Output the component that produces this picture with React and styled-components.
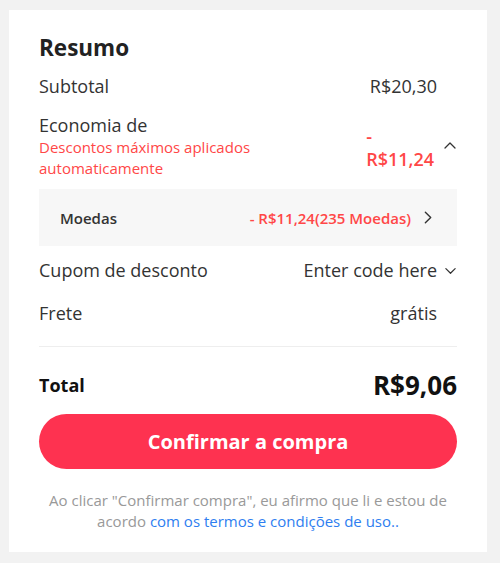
import styled, { createGlobalStyle } from "styled-components"

const GlobalStyle = createGlobalStyle`
  body {
    margin: 0;
    background: #f2f2f2;
    font-family: "Open Sans", "Liberation Sans", sans-serif;
    color: #333;
  }
`

const Card = styled.div`
  margin: 10px 13px 12px 9px;
  background: #fff;
  padding: 24px 30px 20px;
  display: flex;
  flex-direction: column;
`

const Title = styled.h2`
  margin: 0;
  font-size: 22.5px;
  line-height: 28px;
  font-weight: 700;
  color: #222;
`

const Row = styled.div`
  display: grid;
  grid-template-columns: 1fr auto 20px;
  align-items: center;
  margin-top: ${p => p.gap || 0}px;
`

const Label = styled.div`
  font-size: 18px;
  line-height: 24px;
  font-weight: 400;
`

const Value = styled.div`
  font-size: 18px;
  line-height: 24px;
  font-weight: ${p => (p.bold ? 600 : 400)};
  color: ${p => (p.red ? "#ff4747" : "#333")};
  text-align: right;
`

const Note = styled.div`
  font-size: 15px;
  line-height: 21px;
  color: #ff4747;
  max-width: 240px;
`

const Discount = styled(Value)`
  line-height: 23px;
  text-align: left;
  padding: 3px 3px 0 0;
`

const IconCell = styled.div`
  display: flex;
  justify-content: flex-end;
  align-items: center;
`

const SubBox = styled.div`
  margin-top: 10px;
  height: 57px;
  background: #f7f7f7;
  padding: 0 22px 0 21px;
  display: flex;
  align-items: center;
  justify-content: space-between;
`

const SubLabel = styled.span`
  font-size: 15px;
  font-weight: 600;
  color: #333;
`

const SubValue = styled.span`
  display: flex;
  align-items: center;
  gap: 9px;
  font-size: 15px;
  font-weight: 600;
  color: #ff4747;
`

const Divider = styled.hr`
  border: none;
  border-top: 1px solid #eee;
  margin: 21px 0 0;
`

const TotalRow = styled.div`
  display: flex;
  justify-content: space-between;
  align-items: center;
  margin-top: 23px;
  height: 30px;
  color: #111;
  font-weight: 700;
`

const TotalLabel = styled.span`
  font-size: 18px;
`

const TotalValue = styled.span`
  font-size: 26px;
`

const Button = styled.button`
  margin-top: 14px;
  height: 55px;
  border: none;
  border-radius: 28px;
  background: #fe3250;
  color: #fff;
  font-family: inherit;
  font-size: 20px;
  font-weight: 700;
  cursor: pointer;
`

const Terms = styled.p`
  margin: 21px 0 0;
  text-align: center;
  font-size: 15px;
  line-height: 21px;
  color: #999;

  a {
    color: #2e7ef0;
    text-decoration: none;
  }
`

const Chevron = ({ dir = "down", size = 14 }) => {
  const pts = {
    up: "2,9 7,4 12,9",
    down: "2,5 7,10 12,5",
    right: "5,2 10,7 5,12",
  }[dir]
  return (
    <svg width={size} height={size} viewBox="0 0 14 14" fill="none">
      <polyline points={pts} stroke="#333" strokeWidth="1.3" strokeLinecap="round" strokeLinejoin="round" />
    </svg>
  )
}

const App = () => {
  return (
    <>
      <GlobalStyle />
      <Card>
        <Title>Resumo</Title>

        <Row gap={12}>
          <Label>Subtotal</Label>
          <Value>R$20,30</Value>
          <span />
        </Row>

        <Row gap={15}>
          <div>
            <Label>Economia de</Label>
            <Note>Descontos máximos aplicados automaticamente</Note>
          </div>
          <Discount red bold>
            -<br />
            R$11,24
          </Discount>
          <IconCell>
            <Chevron dir="up" />
          </IconCell>
        </Row>

        <SubBox>
          <SubLabel>Moedas</SubLabel>
          <SubValue>
            - R$11,24(235 Moedas)
            <Chevron dir="right" size={15} />
          </SubValue>
        </SubBox>

        <Row gap={12}>
          <Label>Cupom de desconto</Label>
          <Value>Enter code here</Value>
          <IconCell>
            <Chevron dir="down" size={13} />
          </IconCell>
        </Row>

        <Row gap={19}>
          <Label>Frete</Label>
          <Value>grátis</Value>
          <span />
        </Row>

        <Divider />

        <TotalRow>
          <TotalLabel>Total</TotalLabel>
          <TotalValue>R$9,06</TotalValue>
        </TotalRow>

        <Button>Confirmar a compra</Button>

        <Terms>
          Ao clicar "Confirmar compra", eu afirmo que li e estou de acordo{" "}
          <a href="#">com os termos e condições de uso..</a>
        </Terms>
      </Card>
    </>
  )
}

export default App
